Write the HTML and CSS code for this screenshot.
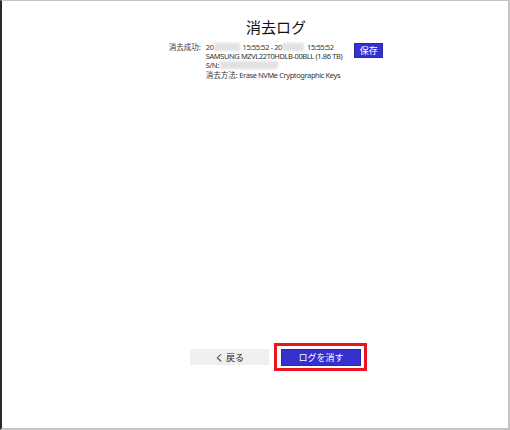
FILE: index.html
```html
<!DOCTYPE html>
<html lang="ja">
<head>
    <meta charset="UTF-8">
    <title>消去ログ</title>
    <link rel="stylesheet" href="styles.css">
</head>
<body>
    <div class="frame">
        <h1 class="title">消去ログ</h1>
        <div class="log">
            <div class="log-label">消去成功:</div>
            <div class="log-body">
                <div class="row">20<span class="blur w26"></span>15:55:52 - 20<span class="blur w24"></span>15:55:52</div>
                <div class="row">SAMSUNG MZVL22T0HDLB-00BLL (1.86 TB)</div>
                <div class="row">S/N:<span class="blur w58"></span></div>
                <div class="row method"><span class="jp">消去方法:</span> Erase NVMe Cryptographic Keys</div>
            </div>
            <div class="btn btn-blue btn-save">保存</div>
        </div>

        <!-- кнопки внизу -->
        <div class="actions">
            <div class="btn btn-gray">く 戻る</div>
            <div class="mark">
                <div class="btn btn-blue btn-wide">ログを消す</div>
            </div>
        </div>
    </div>
</body>
</html>
```

FILE: styles.css
```css
body {
    margin: 0;
    padding: 0;
    background: white;
    font-family: "Noto Sans", "Noto Sans CJK JP", sans-serif;
    color: #333;
}
.frame {
    width: 510px;
    height: 430px;
    box-sizing: border-box;
    border-top: 1px solid #c4c4c4;
    border-left: 2px solid #2a2a2a;
    border-right: 2px solid #c4c4c4;
    border-bottom: 2px solid #c4c4c4;
    padding-left: 42px;
    display: flex;
    flex-direction: column;
    align-items: center;
}
.title {
    margin: 16px 0 0 0;
    font-family: "Noto Sans CJK JP", sans-serif;
    font-size: 15px;
    font-weight: normal;
    line-height: 20px;
    color: #111;
}
.log {
    display: flex;
    align-items: flex-start;
    margin-top: 6px;
    font-size: 7.5px;
    line-height: 9px;
}
.log-label {
    width: 37px;
}
.row {
    white-space: nowrap;
    letter-spacing: -0.4px;
}
.row .jp {
    letter-spacing: 0;
}
.row.method {
    margin-top: 1px;
}
.blur {
    display: inline-block;
    height: 8px;
    vertical-align: -1px;
    background: #e2e2e2;
    filter: blur(1px);
    margin-right: 3px;
}
.w26 { width: 26px; }
.w24 { width: 22px; }
.w58 { width: 58px; margin-left: 1px; }
.btn {
    display: flex;
    align-items: center;
    justify-content: center;
    font-family: "Noto Sans CJK JP", sans-serif;
    font-size: 9px;
    cursor: pointer;
}
.btn-blue {
    background: #3431cf;
    color: white;
    border: 1px solid #2a28a8;
    box-sizing: border-box;
}
.btn-save {
    width: 29px;
    height: 15px;
    margin-left: 12px;
}
.actions {
    margin-top: auto;
    margin-bottom: 57px;
    padding-left: 5px;
    display: flex;
    align-items: center;
}
.btn-gray {
    width: 79px;
    height: 16px;
    background: #efefef;
    color: #222;
    margin-right: 5px;
}
.mark {
    border: 3px solid #e8151f;
    padding: 3px 3px 2px 4px;
}
.btn-wide {
    width: 80px;
    height: 17px;
}
```
